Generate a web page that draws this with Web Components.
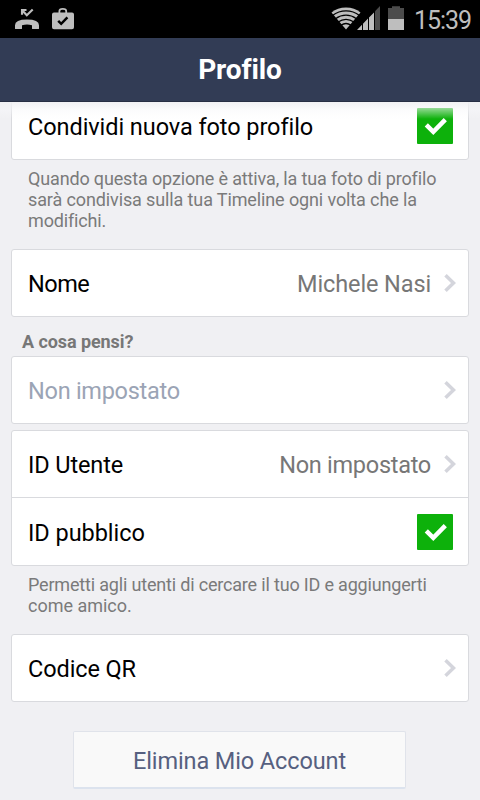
<!DOCTYPE html>
<html lang="it">
<head>
<meta charset="utf-8">
<title>Profilo</title>
<style>
html,body{margin:0;padding:0;width:480px;height:800px;overflow:hidden;background:#f0f0f3;font-family:Roboto,"Noto Sans",sans-serif}
</style>
</head>
<body>
<profile-screen></profile-screen>
<script>
const define = (name, html) => {
  const t = document.createElement('template');
  t.innerHTML = html;
  customElements.define(name, class extends HTMLElement {
    constructor() {
      super();
      this.attachShadow({mode: 'open'}).appendChild(t.content.cloneNode(true));
    }
  });
};

define('status-bar', `
<style>
:host{display:flex;height:38px;background:#000;align-items:center;color:#bebebe;box-sizing:border-box;padding:0 9px 0 0}
svg{display:block;flex:none}
.gap{flex:1}
.time{font-size:25px;line-height:38px;letter-spacing:-1.05px;padding-top:3px;width:57px;white-space:nowrap}
</style>
<svg width="80" height="38" viewBox="0 0 80 38">
  <path fill="#bebebe" d="M15 28.500v-3.200Q15 19.400 27 19.400T39 25.300v3.200q0 .6-.7.6h-5.600q-.7 0-.7-.7v-3.200q-5-1.500-10 0v3.200q0 .7-.7.7h-5.600q-.7 0-.7-.6z"/>
  <path fill="none" stroke="#bebebe" stroke-width="2.100" d="M22 14.800V10h4.500M21.700 9.700l5.100 5.600 5.900-5.900"/>
  <path fill="#bebebe" fill-rule="evenodd" d="M54 12.500h4.500V11q0-3 4.300-3t4.300 3v1.500H72q2 0 2 2v12.800q0 2-2 2H54q-2 0-2-2V14.500q0-2 2-2zm6.300 0h5V11q0-1.200-2.500-1.200t-2.500 1.200z"/>
  <path fill="none" stroke="#000" stroke-width="2.500" d="M58.200 20.800l3 3 6.200-6.400"/>
</svg>
<span class="gap"></span>
<svg width="84" height="38" viewBox="330 0 84 38">
  <path fill="#bebebe" d="M346 29.500L331.500 12.600Q337.500 7.600 346 7.600T360.500 12.600z"/>
  <g fill="none" stroke="#000" stroke-width="1.300">
    <path d="M332.500 15.500Q338.500 10.900 346 10.900T359.500 15.500"/>
    <path d="M335.500 18.700Q340.500 15.100 346 15.100T356.500 18.700"/>
    <path d="M338 22Q342 19.300 346 19.300T354 22"/>
    <path d="M341 25.300Q343.500 23.500 346 23.500T351 25.300"/>
  </g>
  <path fill="#bebebe" d="M357 30l5-5.200V30zM363 30v-6.200l5-5.200V30zM369 30V17.600l5-5.200V30z"/>
  <path fill="#4c4c4c" d="M375 11.200l5-5.200v24h-5z"/>
  <path fill="#4c4c4c" d="M388 8h4V6.200h8V8h4v11h-16z"/>
  <path fill="#bebebe" d="M388 19h16v11h-16z"/>
</svg>
<span class="time">15:39</span>`);

define('title-bar', `
<style>
:host{display:block;height:64px;box-sizing:border-box;background:#323c55;border-bottom:1px solid #272e43;color:#fff;text-align:center;font-size:28px;line-height:64px;font-weight:700;letter-spacing:-.1px}
</style><slot></slot>`);

define('card-group', `
<style>
:host{display:block;box-sizing:border-box;width:458px;margin-left:11px;background:#fff;border:1px solid #d9dade;border-radius:3px}
</style><slot></slot>`);

define('setting-row', `
<style>
:host{display:flex;box-sizing:border-box;height:66px;align-items:center;padding:2px 15px 0 16px;font-size:23.5px;line-height:28px;color:#000;white-space:nowrap}
:host([divided]){height:67px;border-bottom:1px solid #d9dade}
:host([muted]){color:#9ba4b5}
.label{flex:1}
.value{color:#777}
</style>
<span class="label"><slot></slot></span><span class="value"><slot name="value"></slot></span><slot name="end"></slot>`);

define('row-chevron', `
<style>:host{display:block;width:22px;height:22px;margin:-2px -9px 0 9px}svg{display:block}</style>
<svg width="22" height="22" viewBox="0 0 22 22"><path d="M5.500 3.200L13.500 11l-8 7.800" fill="none" stroke="#d4d5dc" stroke-width="3.500"/></svg>`);

define('check-mark', `
<style>:host{display:block;width:36px;height:36px;margin-top:-2px}svg{display:block}</style>
<svg width="36" height="36" viewBox="0 0 36 36"><rect width="36" height="36" rx="1" fill="#0db10b"/><path d="M9.300 16.800l7 7L28.300 11.700" fill="none" stroke="#fff" stroke-width="4.500"/></svg>`);

define('help-text', `
<style>:host{display:block;margin-left:28px;color:#7a7a7a;font-size:18px;line-height:21px;letter-spacing:-.15px;white-space:nowrap}</style><slot></slot>`);

define('section-label', `
<style>:host{display:block;margin-left:22px;color:#777;font-size:18px;line-height:21px;font-weight:700;letter-spacing:-.08px;white-space:nowrap}</style><slot></slot>`);

define('action-button', `
<style>:host{display:block;box-sizing:border-box;width:333px;height:58px;margin-left:73px;background:#f9f9f9;border:1px solid #e0e3ea;border-bottom:2px solid #dce3ee;border-radius:2px;text-align:center;font-size:23.5px;line-height:58px;letter-spacing:-.11px;color:#566080;white-space:nowrap}</style><slot></slot>`);

define('profile-screen', `
<style>
:host{display:block;width:480px;height:800px;overflow:hidden;background:#f0f0f3}
main{display:flex;flex-direction:column;height:698px;overflow:hidden;position:relative}
main>*{flex:none}
.top{margin-top:-10px}
.tight{letter-spacing:-.27px}
.shade{position:absolute;inset:0 0 auto;height:17px;background:linear-gradient(rgba(240,240,243,.95),rgba(248,248,250,.45) 50%,rgba(255,255,255,0))}
</style>
<status-bar></status-bar>
<title-bar>Profilo</title-bar>
<main>
  <card-group class="top"><setting-row><span style="letter-spacing:-.07px">Condividi nuova foto profilo</span><check-mark slot="end"></check-mark></setting-row></card-group>
  <help-text style="margin-top:8px">Quando questa opzione è attiva, la tua foto di profilo<br><span style="letter-spacing:-.12px">sarà condivisa sulla tua Timeline ogni volta che la</span><br>modifichi.</help-text>
  <card-group style="margin-top:18px"><setting-row><span style="letter-spacing:-.5px">Nome</span><span slot="value" style="letter-spacing:-.12px">Michele Nasi</span><row-chevron slot="end"></row-chevron></setting-row></card-group>
  <section-label style="margin-top:14px">A cosa pensi?</section-label>
  <card-group style="margin-top:4px"><setting-row muted><span class="tight">Non impostato</span><row-chevron slot="end"></row-chevron></setting-row></card-group>
  <card-group style="margin-top:6px"><setting-row divided><span style="letter-spacing:-.12px">ID Utente</span><span slot="value" class="tight">Non impostato</span><row-chevron slot="end"></row-chevron></setting-row><setting-row style="height:67px"><span style="letter-spacing:-.05px">ID pubblico</span><check-mark slot="end"></check-mark></setting-row></card-group>
  <help-text style="margin-top:8px"><span style="letter-spacing:-.18px">Permetti agli utenti di cercare il tuo ID e aggiungerti</span><br><span style="letter-spacing:-.02px">come amico.</span></help-text>
  <card-group style="margin-top:18px"><setting-row><span style="letter-spacing:-.1px">Codice QR</span><row-chevron slot="end"></row-chevron></setting-row></card-group>
  <action-button style="margin-top:29px">Elimina Mio Account</action-button>
  <div class="shade"></div>
</main>`);
</script>
</body>
</html>
